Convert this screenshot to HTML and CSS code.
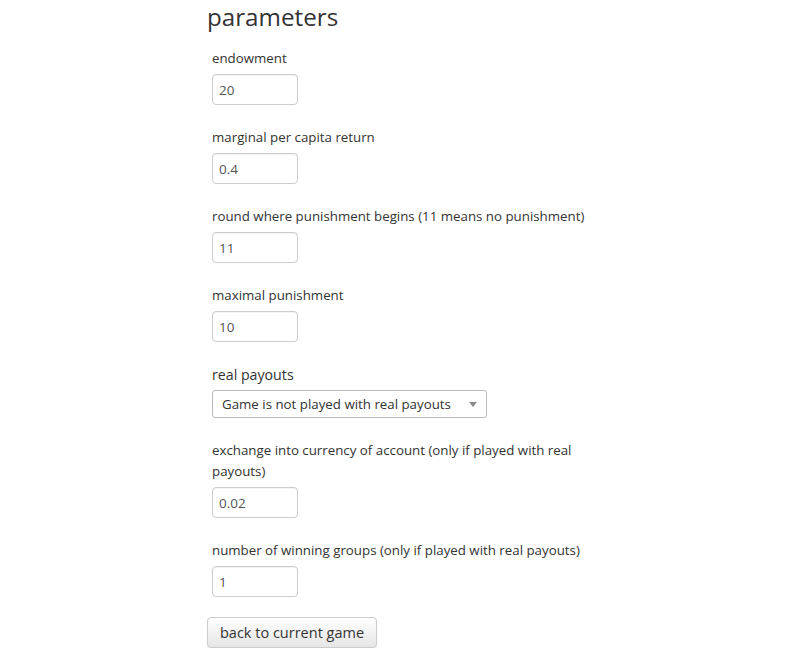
FILE: index.html
```html
<!DOCTYPE html>
<html>
<head>
<meta charset="utf-8">
<link rel="stylesheet" href="styles.css">
</head>
<body>
<div class="page">
  <h2 class="title">parameters</h2>
  <div class="form">
    <div class="group">
      <label class="label">endowment</label>
      <input class="field" type="text" value="20">
    </div>
    <div class="group">
      <label class="label">marginal per capita return</label>
      <input class="field" type="text" value="0.4">
    </div>
    <div class="group">
      <label class="label">round where punishment begins (11 means no punishment)</label>
      <input class="field" type="text" value="11">
    </div>
    <div class="group">
      <label class="label">maximal punishment</label>
      <input class="field" type="text" value="10">
    </div>
    <div class="group">
      <label class="label label-lg">real payouts</label>
      <div class="select">
        <span class="select-text">Game is not played with real payouts</span>
        <span class="select-arrow"></span>
      </div>
    </div>
    <div class="group">
      <label class="label">exchange into currency of account (only if played with real payouts)</label>
      <input class="field" type="text" value="0.02">
    </div>
    <div class="group group-last">
      <label class="label">number of winning groups (only if played with real payouts)</label>
      <input class="field" type="text" value="1">
    </div>
  </div>
  <button class="btn" type="button">back to current game</button>
</div>
</body>
</html>
```
FILE: styles.css
```css
html, body {
  margin: 0;
  padding: 0;
  background: #ffffff;
}
body {
  font-family: "Open Sans", "Liberation Sans", sans-serif;
  color: #333333;
}
.page {
  padding-left: 207px;
  display: flex;
  flex-direction: column;
  align-items: flex-start;
}
.title {
  margin: 0;
  padding-top: 1px;
  font-size: 24.2px;
  font-weight: 400;
  line-height: 32px;
  color: #333333;
  height: 47px;
}
.form {
  padding-left: 5px;
  width: 395px;
  display: flex;
  flex-direction: column;
}
.group {
  display: flex;
  flex-direction: column;
  align-items: flex-start;
  gap: 5px;
  margin-bottom: 22px;
}
.group-last {
  margin-bottom: 20px;
}
.label {
  font-size: 13.3px;
  line-height: 21px;
  color: #333333;
}
.label-lg {
  font-size: 14.2px;
}
.field {
  box-sizing: border-box;
  width: 86px;
  height: 31px;
  margin: 0;
  padding: 4px 6px;
  border: 1px solid #cccccc;
  border-radius: 4px;
  font-family: "Open Sans", "Liberation Sans", sans-serif;
  font-size: 13.5px;
  color: #555555;
  background: #ffffff;
  box-shadow: inset 0 1px 1px rgba(0,0,0,0.05);
}
.select {
  box-sizing: border-box;
  width: 275px;
  height: 28px;
  border: 1px solid #b9b9b9;
  border-radius: 3px;
  background: #ffffff;
  display: flex;
  align-items: center;
  justify-content: space-between;
  padding: 0 9px 0 9px;
}
.select-text {
  font-size: 13.3px;
  color: #333333;
}
.select-arrow {
  width: 0;
  height: 0;
  border-left: 4px solid transparent;
  border-right: 4px solid transparent;
  border-top: 5px solid #8a8a8a;
}
.btn {
  box-sizing: border-box;
  height: 31px;
  margin: 0;
  padding: 0 12px;
  white-space: nowrap;
  border: 1px solid #cccccc;
  border-radius: 4px;
  background: linear-gradient(#ffffff, #e6e6e6);
  font-family: "Open Sans", "Liberation Sans", sans-serif;
  font-size: 14.5px;
  color: #333333;
  box-shadow: 0 1px 1px rgba(0,0,0,0.1);
}
```
